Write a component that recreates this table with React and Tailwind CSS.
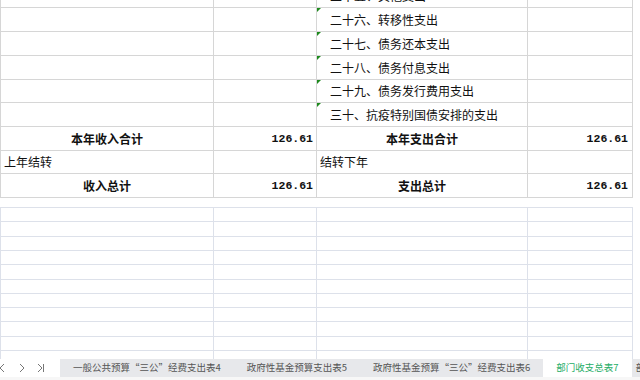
import React from "react";

const topRows = [
  { h: "h-[24px] -mt-[16px]", c: "二十五、其他支出", item: true },
  { h: "h-[24px]", c: "二十六、转移性支出", item: true, mark: true },
  { h: "h-[24px]", c: "二十七、债务还本支出", item: true, mark: true },
  { h: "h-[24px]", c: "二十八、债务付息支出", item: true, mark: true },
  { h: "h-[23px]", c: "二十九、债务发行费用支出", item: true, mark: true },
  { h: "h-[24px]", c: "三十、抗疫特别国债安排的支出", item: true, mark: true },
  { h: "h-[24px]", a: "本年收入合计", b: "126.61", c: "本年支出合计", d: "126.61", bold: true },
  { h: "h-[23px]", a: "上年结转", c: "结转下年" },
  { h: "h-[24px]", a: "收入总计", b: "126.61", c: "支出总计", d: "126.61", bold: true },
];

const emptyRows = [
  "h-[14px]", "h-[15px]", "h-[14px]", "h-[14px]", "h-[15px]",
  "h-[14px]", "h-[14px]", "h-[14px]", "h-[15px]", "h-[14px]", "h-[8px]",
];

const tabs = [
  "一般公共预算“三公”经费支出表4",
  "政府性基金预算支出表5",
  "政府性基金预算“三公”经费支出表6",
];

function TopRow({ row }) {
  const txt = row.bold ? "font-bold justify-center" : "justify-start pl-[3px]";
  return (
    <div className={`flex ${row.h} border-b border-[#d6d6d6]`}>
      <div className={`w-[213px] shrink-0 border-r border-[#d6d6d6] flex items-center ${txt}`}>
        {row.a}
      </div>
      <div className="w-[103px] shrink-0 border-r border-[#d6d6d6] flex items-center justify-end pr-[3px] font-['Liberation_Mono',monospace] font-bold text-[11.5px]">
        {row.b}
      </div>
      <div
        className={`relative w-[211px] shrink-0 border-r border-[#d6d6d6] flex items-center ${
          row.item ? "pl-[13px]" : txt
        }`}
      >
        {row.mark && (
          <span className="absolute left-0 top-0 w-0 h-0 border-t-[4px] border-r-[4px] border-t-[#1e8a1e] border-r-transparent" />
        )}
        {row.c}
      </div>
      <div className="w-[105px] shrink-0 border-r border-[#d6d6d6] flex items-center justify-end pr-[4px] font-['Liberation_Mono',monospace] font-bold text-[11.5px]">
        {row.d}
      </div>
    </div>
  );
}

function Chevron({ dir }) {
  return (
    <svg width="8" height="10" viewBox="0 0 8 10" className="text-[#777]">
      {dir === "left" ? (
        <path d="M6 1 L2 5 L6 9" fill="none" stroke="currentColor" strokeWidth="1" />
      ) : (
        <path d="M2 1 L6 5 L2 9" fill="none" stroke="currentColor" strokeWidth="1" />
      )}
    </svg>
  );
}

export default function App() {
  return (
    <div className="w-[640px] h-[380px] overflow-hidden bg-white flex flex-col font-['Noto_Sans_CJK_SC',sans-serif] text-[12px] text-[#111]">
      <div className="w-[633px] border-l border-[#d6d6d6] leading-none">
        {topRows.map((row, i) => (
          <TopRow key={i} row={row} />
        ))}
      </div>

      <div className="mt-[9px] w-[633px] border-t border-l border-[#dde1ea]">
        {emptyRows.map((h, i) => (
          <div key={i} className={`flex ${h} ${i < emptyRows.length - 1 ? "border-b" : ""} border-[#dde1ea]`}>
            <div className="w-[213px] shrink-0 border-r border-[#dde1ea]" />
            <div className="w-[103px] shrink-0 border-r border-[#dde1ea]" />
            <div className="w-[211px] shrink-0 border-r border-[#dde1ea]" />
            <div className="w-[105px] shrink-0 border-r border-[#dde1ea]" />
          </div>
        ))}
      </div>

      <div className="flex h-[18px] shrink-0 text-[9.5px] leading-none">
        <div className="w-[60px] shrink-0 bg-white flex items-center">
          <span className="-ml-[2px]"><Chevron dir="left" /></span>
          <span className="ml-[12px]"><Chevron dir="right" /></span>
          <span className="ml-[10px] flex items-center">
            <Chevron dir="right" />
            <span className="w-px h-[8px] bg-[#777] -ml-[1px]" />
          </span>
        </div>
        <div className="flex-1 bg-[#e7e8eb] flex items-stretch overflow-hidden whitespace-nowrap">
          {tabs.map((t) => (
            <div key={t} className="px-[13px] flex items-center text-[#555]">
              {t}
            </div>
          ))}
          <div className="px-[13px] bg-white flex items-center text-[#25ad66]">部门收支总表7</div>
          <div className="pl-[4px] flex items-center text-[#555]">部门</div>
        </div>
      </div>
      <div className="flex-1 bg-[#f7f7f7]" />
    </div>
  );
}
